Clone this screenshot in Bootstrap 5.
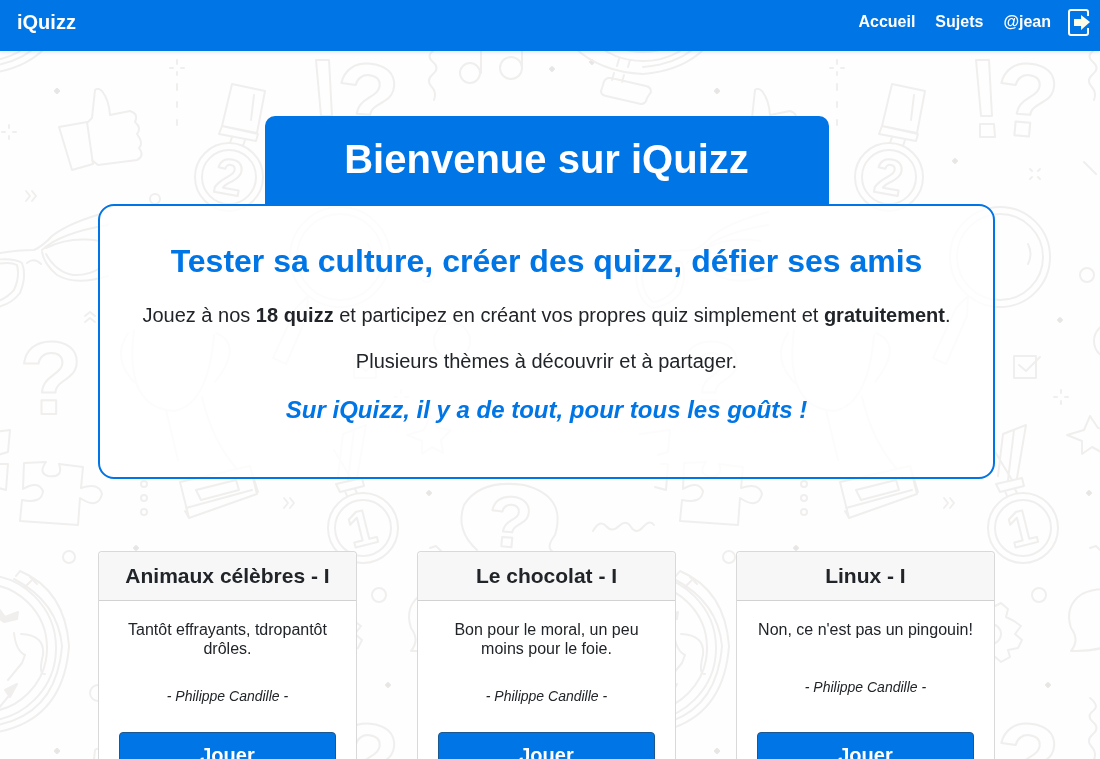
<!DOCTYPE html>
<html lang="fr">
<head>
<meta charset="utf-8">
<meta name="viewport" content="width=device-width, initial-scale=1">
<title>iQuizz</title>
<link href="https://cdn.jsdelivr.net/npm/bootstrap@5.3.0/dist/css/bootstrap.min.css" rel="stylesheet">
<style>
  :root { --quiz-blue: #0075e6; }
  body { font-family: "Liberation Sans", Arial, sans-serif; color: #212529; background: #fefefe; overflow-x: hidden; }
  .backdrop { position: fixed; inset: 0; width: 100%; height: 100%; z-index: -1; }
  .topbar { background: var(--quiz-blue); padding: 3px 9px 10px 17px; min-height: 51px; box-shadow: 0 1px 4px rgba(0, 30, 160, .12); }
  .topbar .navbar-brand { font-size: 20px; line-height: 30px; padding: 0; }
  .topbar a { color: #fff; }
  .menu { gap: 20px; font-size: 16px; line-height: 30px; }
  .exit-link { margin-left: -4px; }
  .page-main { padding: 65px 7px 0 0; }
  .page-wrap { max-width: 957px; padding: 0 30px; }
  .hero-tab { max-width: 564px; height: 88px; background: var(--quiz-blue); border-radius: 10px 10px 0 0; padding-top: 19px; }
  .hero-tab h1 { font-size: 40px; line-height: 48px; }
  .hero-panel { border: 2px solid var(--quiz-blue); border-radius: 16px; background: rgba(255, 255, 255, .8); padding: 36px 16px 49px; font-size: 20px; line-height: 30px; }
  .hero-panel h2 { font-size: 32px; line-height: 38px; margin-bottom: 20px; }
  .hero-panel .slogan { font-size: 24px; line-height: 36px; }
  .blue-text { color: var(--quiz-blue); }
  .quiz-row { --bs-gutter-x: 60px; margin-top: 72px; }
  .quiz-card { border-color: rgba(0, 0, 0, .15); border-radius: 4px; }
  .quiz-card .card-header { background: #f7f7f7; border-color: rgba(0, 0, 0, .15); padding: 11px 12px 12px; }
  .quiz-card h3 { font-size: 21px; line-height: 25px; }
  .quiz-card .card-body { padding: 19px 20px 20px; }
  .quiz-about { font-size: 16px; line-height: 19px; }
  .quiz-author { font-size: 14px; line-height: 20px; padding: 28px 0 26px; }
  .play-btn { background: var(--quiz-blue); color: #fff; border: 1px solid #1c578f; border-radius: 4px; font-size: 20px; line-height: 30px; padding: 7px 12px; }
</style>
</head>
<body>

<svg class="backdrop" aria-hidden="true">
  <defs>
    <g id="doodles" fill="none" stroke="#f0efee" stroke-width="2" stroke-linejoin="round" stroke-linecap="round">
      <!-- thumb up -->
      <path d="M59 127 87 122 93 164 72 170ZM88 122 92 118 95 90Q98 87 102 91 109 100 110 115L130 111Q139 114 135 122 142 128 137 134 144 143 139 148 145 156 137 160L98 165Q94 162 92 160"/>
      <!-- medal 2 -->
      <path d="M232 84 265 91 257 133 222 126ZM222 126 258 134 256 141 219 134ZM232 137 230 143M245 140 243 146M254 95 251 120"/>
      <circle cx="229" cy="177" r="34"/><circle cx="229" cy="177" r="27"/>
      <!-- medal 1 -->
      <path d="M334 450 352 480M343 434 338 476M343 434 366 425 357 478M354 430 348 480M336 484 362 478 364 486 340 492ZM345 491 347 496M355 489 357 493"/>
      <circle cx="363" cy="528" r="35"/><circle cx="363" cy="528" r="28"/>
      <!-- exclamation bar -->
      <path d="M316 60 329 60 332 116 321 116ZM320 124 334 124 335 137 320 137Z"/>
      <!-- music notes -->
      <circle cx="470" cy="73" r="10"/><circle cx="511" cy="68" r="11"/><path d="M481 73V36L522 30V68"/>
      <!-- squiggles -->
      <path d="M430 698Q440 706 433 711 426 716 433 722 440 728 433 734 426 740 431 746 437 752 434 760M593 531Q600 519 606 526T619 526 631 527 643 527 654 525"/>
      <!-- glasses -->
      <path d="M-24 258Q8 250 34 250 43 246 52 236 70 222 108 212M-20 262Q12 256 22 263 27 276 20 293 10 306-8 308-22 301-24 277ZM-14 267Q8 260 17 265 20 277 14 290 4 301-7 302-17 295-18 277ZM42 250Q60 233 108 225M42 252Q44 264 57 275 76 286 108 276M46 248Q70 236 100 241M46 254Q56 272 73 275 88 276 100 268M27 263Q34 257 41 264"/>
      <!-- magnifier -->
      <circle cx="340" cy="257" r="50"/><circle cx="340" cy="257" r="43"/><path d="M368 244Q373 254 368 264M308 296 296 308 273 358 286 364 307 316ZM424 162 436 174"/>
      <!-- trophy -->
      <path d="M134 330Q124 408 174 411 208 405 214 335M128 333Q110 360 138 386M216 333Q244 345 215 382M166 410 178 460M202 397Q212 440 236 468M180 482 250 466 257 494 189 518ZM186 508 252 490M196 490 236 480 239 490 201 500ZM189 518 185 511M250 466 258 492"/>
      <!-- puzzle pieces -->
      <path d="M24 463 46 462Q38 473 48 476 64 478 59 464L83 467 81 488Q99 482 102 494 98 510 80 498L78 525 20 521 22 500Q42 504 43 491 38 480 23 489ZM-20 434 10 430 8 452-2 455M0 464 8 464 6 490-5 487"/>
      <!-- speech bubbles -->
      <path d="M552 551Q546 547 555 535 567 496 524 485 480 479 464 505 455 530 477 550"/>
      <path d="M411 651Q420 640 411 628 404 606 422 594 446 583 466 598 481 622 460 641 440 652 411 651Z"/>
      <!-- gear -->
      <path d="M335 606 341 603 348 609 346 617 354 621 361 626 355 634 362 640 358 648 348 650 350 657 341 662 334 656 323 659 316 652 309 654 306 645 311 638 303 632 310 625 307 616 316 612 323 615 324 605Z"/><circle cx="331" cy="634" r="10"/>
      <!-- globe -->
      <path d="M16 576 20 571Q65 590 69 646 63 727-17 734-60 732-86 707M14 579Q58 602 62 646 56 721-17 727M30 577 37 584M25 587 31 581"/>
      <circle cx="-17" cy="648" r="73"/><circle cx="-17" cy="648" r="64"/>
      <path d="M14 633Q16 651 25 655L22 663 8 680M21 634Q45 635 43 655 38 675 45 674M12 692-2 709M-70 620Q-40 590-20 598 0 617-24 628-36 650-56 640M-49 670-25 668-9 684-20 708"/>
      <path d="M5 690 17 684 10 697ZM-8 614 0 610 5 617 18 612 17 619 4 622Z" fill="#f0efee"/>
      <path d="M-30 720-32 727M-41 719-43 726M-36 735-38 742M-46 733-48 740M-52 738Q-56 739-57 745L-59 751Q-59 755-54 756L-19 764Q-14 764-13 758L-9 752Q-9 747-14 746L-49 738Z"/>
      <!-- checkbox and star -->
      <path d="M354 356H376V378H354ZM359 365 366 371 380 357M430 416 438 428 451 430 441 440 443 453 432 447 422 454 422 441 407 435 424 430Z"/>
      <!-- rings -->
      <circle cx="155" cy="199" r="5"/><circle cx="427" cy="275" r="7"/><circle cx="69" cy="557" r="6"/><circle cx="379" cy="595" r="7"/><circle cx="98" cy="693" r="8"/><circle cx="452" cy="341" r="18"/>
      <circle cx="144" cy="484" r="3"/><circle cx="144" cy="498" r="3"/><circle cx="144" cy="512" r="3"/>
      <!-- chevrons -->
      <path d="M26 191 30 196 26 201M32 191 36 196 32 201M284 498 288 503 284 508M290 498 294 503 290 508M85 316 90 312 95 316M85 322 90 318 95 322M430 548 436 546 442 552"/>
      <!-- sparkles -->
      <path d="M9 125V128M9 136V139M2 132H5M13 132H16M177 60V64M177 72V75M170 68H173M181 68H184M177 84V90M177 102V107M177 120V125M370 169 372 171M380 169 378 171M370 179 372 177M380 179 378 177M401 390V393M401 401V404M394 397H397M405 397H408"/>
      <path d="M57 89 59 91 57 93 55 91ZM552 67 554 69 552 71 550 69ZM592 60 594 62 592 64 590 62ZM295 159 297 161 295 163 293 161ZM400 318 402 320 400 322 398 320ZM429 491 431 493 429 495 427 493ZM136 546 138 548 136 550 134 548ZM388 683 390 685 388 687 386 685ZM57 749 59 751 57 753 55 751Z" fill="#e2e1e0" stroke="#e8e7e6"/>
      <g font-family="Liberation Sans, sans-serif" font-weight="bold" text-anchor="middle">
        <text font-size="104" transform="translate(364 136) rotate(5)">?</text>
        <text font-size="104" transform="translate(51 414)">?</text>
        <text font-size="72" transform="translate(508 547) rotate(5)">?</text>
        <text font-size="50" transform="translate(226 194) rotate(10)">2</text>
        <text font-size="50" transform="translate(366 545) rotate(-14)">1</text>
      </g>
    </g>
    <pattern id="tile" width="660" height="660" patternUnits="userSpaceOnUse">
      <use href="#doodles"/><use href="#doodles" x="660"/><use href="#doodles" y="-660"/><use href="#doodles" x="660" y="-660"/>
    </pattern>
  </defs>
  <rect width="100%" height="100%" fill="url(#tile)"/>
</svg>

<nav class="topbar d-flex justify-content-between align-items-center fw-bold">
  <a class="navbar-brand m-0" href="#">iQuizz</a>
  <div class="menu d-flex align-items-center">
    <a class="text-decoration-none" href="#">Accueil</a>
    <a class="text-decoration-none" href="#">Sujets</a>
    <a class="text-decoration-none" href="#">@jean</a>
    <a class="exit-link d-flex" href="#" aria-label="Se déconnecter">
      <svg width="24" height="28" viewBox="0 0 24 28" fill="none" aria-hidden="true">
        <path d="M21 8V4Q21 2 19 2H4Q2 2 2 4V25Q2 27 4 27H19Q21 27 21 25V20" stroke="#fff" stroke-width="2"/>
        <path d="M7 11H14V7L23 14 14 22V18H7Z" fill="#fffde8"/>
      </svg>
    </a>
  </div>
</nav>

<main class="page-main">
  <div class="page-wrap container-fluid mx-auto text-center">
    <header class="hero-tab mx-auto text-white">
      <h1 class="fw-bold m-0">Bienvenue sur iQuizz</h1>
    </header>
    <section class="hero-panel">
      <h2 class="blue-text fw-bold">Tester sa culture, créer des quizz, défier ses amis</h2>
      <p class="mb-3">Jouez à nos <strong>18 quizz</strong> et participez en créant vos propres quiz simplement et <strong>gratuitement</strong>.</p>
      <p class="mb-3">Plusieurs thèmes à découvrir et à partager.</p>
      <p class="slogan blue-text fw-bold fst-italic m-0">Sur iQuizz, il y a de tout, pour tous les goûts !</p>
    </section>

    <div class="quiz-row row row-cols-1 row-cols-md-3">
      <div class="col">
        <article class="quiz-card card h-100">
          <div class="card-header"><h3 class="fw-bold m-0">Animaux célèbres - I</h3></div>
          <div class="card-body d-flex flex-column">
            <p class="quiz-about m-0">Tantôt effrayants, tdropantôt drôles.</p>
            <p class="quiz-author fst-italic my-auto">- Philippe Candille -</p>
            <button class="play-btn btn w-100 fw-bold" type="button">Jouer</button>
          </div>
        </article>
      </div>
      <div class="col">
        <article class="quiz-card card h-100">
          <div class="card-header"><h3 class="fw-bold m-0">Le chocolat - I</h3></div>
          <div class="card-body d-flex flex-column">
            <p class="quiz-about m-0">Bon pour le moral, un peu moins pour le foie.</p>
            <p class="quiz-author fst-italic my-auto">- Philippe Candille -</p>
            <button class="play-btn btn w-100 fw-bold" type="button">Jouer</button>
          </div>
        </article>
      </div>
      <div class="col">
        <article class="quiz-card card h-100">
          <div class="card-header"><h3 class="fw-bold m-0">Linux - I</h3></div>
          <div class="card-body d-flex flex-column">
            <p class="quiz-about m-0">Non, ce n'est pas un pingouin!</p>
            <p class="quiz-author fst-italic my-auto">- Philippe Candille -</p>
            <button class="play-btn btn w-100 fw-bold" type="button">Jouer</button>
          </div>
        </article>
      </div>
    </div>
  </div>
</main>

<script src="https://cdn.jsdelivr.net/npm/bootstrap@5.3.0/dist/js/bootstrap.bundle.min.js"></script>
</body>
</html>
